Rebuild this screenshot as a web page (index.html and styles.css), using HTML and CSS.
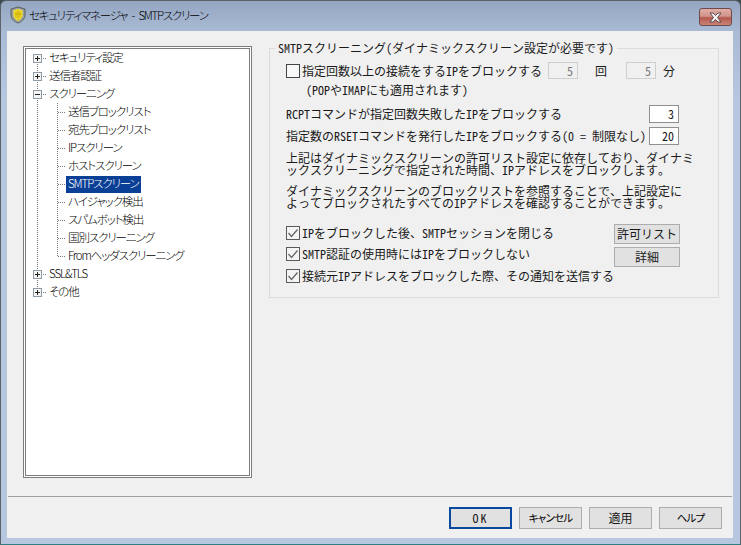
FILE: index.html
```html
<!DOCTYPE html>
<html lang="ja">
<head>
<meta charset="utf-8">
<title>セキュリティマネージャ - SMTPスクリーン</title>
<link rel="stylesheet" href="styles.css">
</head>
<body>
<div class="window">
  <header class="titlebar">
    <svg class="shield" width="16" height="18" viewBox="0 0 16 18">
      <path d="M1 3 L8 1 L15 3 L15 9 C15 13 11 16 8 17 C5 16 1 13 1 9 Z" fill="#9a9e9c" stroke="#5c5f5f" stroke-width="1"/>
      <path d="M3.500 4.500 L8 3 L12.500 4.500 L12.500 9 C12.500 11.500 10 14 8 15 C6 14 3.500 11.500 3.500 9 Z" fill="#f6e62a"/>
      <path d="M6 5 V12 M8 4 V14 M10 5 V12 M4.500 8 H11.500" stroke="#c9a60f" stroke-width="1" fill="none"/>
    </svg>
    <span class="title">セキュリティマネージャ - SMTPスクリーン</span>
    <button class="close" type="button" aria-label="閉じる">
      <svg width="15" height="11" viewBox="0 0 15 11">
        <path d="M2 1 H5 L7.500 3.500 L10 1 H13 L9.500 5.500 L13 10 H10 L7.500 7.500 L5 10 H2 L5.500 5.500 Z" fill="#f4f4f6" stroke="#5c4a4e" stroke-width="1"/>
      </svg>
    </button>
  </header>
  <div class="client">
    <div class="main">
      <nav class="tree">
        <ul class="roots">
          <li class="row"><span class="box plus"></span><span class="dash-root"></span><span class="label">セキュリティ設定</span></li>
          <li class="row"><span class="box plus"></span><span class="dash-root"></span><span class="label">送信者認証</span></li>
          <li>
            <div class="row"><span class="box minus"></span><span class="dash-root"></span><span class="label">スクリーニング</span></div>
            <ul class="children">
              <li class="row"><span class="dash-child"></span><span class="label">送信ブロックリスト</span></li>
              <li class="row"><span class="dash-child"></span><span class="label">宛先ブロックリスト</span></li>
              <li class="row"><span class="dash-child"></span><span class="label">IPスクリーン</span></li>
              <li class="row"><span class="dash-child"></span><span class="label">ホストスクリーン</span></li>
              <li class="row"><span class="dash-child"></span><span class="label selected">SMTPスクリーン</span></li>
              <li class="row"><span class="dash-child"></span><span class="label">ハイジャック検出</span></li>
              <li class="row"><span class="dash-child"></span><span class="label">スパムボット検出</span></li>
              <li class="row"><span class="dash-child"></span><span class="label">国別スクリーニング</span></li>
              <li class="row"><span class="dash-child"></span><span class="label">Fromヘッダスクリーニング</span></li>
            </ul>
          </li>
          <li class="row"><span class="box plus"></span><span class="dash-root"></span><span class="label">SSL&amp;TLS</span></li>
          <li class="row"><span class="box plus"></span><span class="dash-root"></span><span class="label">その他</span></li>
        </ul>
      </nav>
      <fieldset class="group">
        <legend>SMTPスクリーニング(ダイナミックスクリーン設定が必要です)</legend>
        <div class="line first">
          <span class="cb"></span>
          <span class="cb-text grow">指定回数以上の接続をするIPをブロックする</span>
          <span class="field disabled">5</span>
          <span class="unit-a">回</span>
          <span class="field disabled">5</span>
          <span class="unit-b">分</span>
        </div>
        <p class="note">(POPやIMAPにも適用されます)</p>
        <div class="line rcpt">
          <span class="grow">RCPTコマンドが指定回数失敗したIPをブロックする</span>
          <span class="field">3</span>
        </div>
        <div class="line rset">
          <span class="grow">指定数のRSETコマンドを発行したIPをブロックする(0 = 制限なし)</span>
          <span class="field">20</span>
        </div>
        <p class="para one">上記はダイナミックスクリーンの許可リスト設定に依存しており、ダイナミ<br>ックスクリーニングで指定された時間、IPアドレスをブロックします。</p>
        <p class="para two">ダイナミックスクリーンのブロックリストを参照することで、上記設定に<br>よってブロックされたすべてのIPアドレスを確認することができます。</p>
        <div class="checks">
          <div class="check-col">
            <div class="check-row">
              <svg class="cb-svg" width="14" height="14" viewBox="0 0 14 14"><rect x="0.500" y="0.500" width="13" height="13" fill="#f4f4f4" stroke="#5a5a5a"/><path d="M2.500 7 L5.500 10.500 L11.500 3.500" fill="none" stroke="#666" stroke-width="1.300"/></svg>
              <span class="cb-text">IPをブロックした後、SMTPセッションを閉じる</span>
            </div>
            <div class="check-row">
              <svg class="cb-svg" width="14" height="14" viewBox="0 0 14 14"><rect x="0.500" y="0.500" width="13" height="13" fill="#f4f4f4" stroke="#5a5a5a"/><path d="M2.500 7 L5.500 10.500 L11.500 3.500" fill="none" stroke="#666" stroke-width="1.300"/></svg>
              <span class="cb-text">SMTP認証の使用時にはIPをブロックしない</span>
            </div>
            <div class="check-row">
              <svg class="cb-svg" width="14" height="14" viewBox="0 0 14 14"><rect x="0.500" y="0.500" width="13" height="13" fill="#f4f4f4" stroke="#5a5a5a"/><path d="M2.500 7 L5.500 10.500 L11.500 3.500" fill="none" stroke="#666" stroke-width="1.300"/></svg>
              <span class="cb-text">接続元IPアドレスをブロックした際、その通知を送信する</span>
            </div>
          </div>
          <div class="side-buttons">
            <button class="side" type="button">許可リスト</button>
            <button class="side" type="button">詳細</button>
          </div>
        </div>
      </fieldset>
    </div>
    <footer class="footer">
      <button class="btn default" type="button">OK</button>
      <button class="btn narrow" type="button">キャンセル</button>
      <button class="btn" type="button">適用</button>
      <button class="btn narrow" type="button">ヘルプ</button>
    </footer>
  </div>
</div>
</body>
</html>
```

FILE: styles.css
```css
* { box-sizing: border-box; }
html, body { margin: 0; padding: 0; }
body {
  width: 741px;
  height: 545px;
  overflow: hidden;
  background: #3c4a4c;
}
.window {
  width: 741px;
  height: 545px;
  display: flex;
  flex-direction: column;
  border-radius: 6px 6px 0 0;
  border: 1px solid #5a6468;
  border-bottom-color: #2f7f80;
  background: linear-gradient(180deg, #94a6c2 0, #a9bad4 30px, #b8c7e0 100px, #b8c7e0 100%);
}
.titlebar {
  height: 30px;
  flex: none;
  display: flex;
  align-items: center;
  padding: 0 8px 2px 9px;
}
.shield { flex: none; margin-right: 3px; }
.title {
  font: 300 11.500px "Noto Sans CJK JP", sans-serif;
  font-feature-settings: "palt";
  color: #000;
  letter-spacing: -1.250px;
  word-spacing: 3px;
}
.close {
  margin-left: auto;
  margin-top: 4px;
  width: 33px;
  height: 18px;
  padding: 0;
  display: flex;
  align-items: center;
  justify-content: center;
  border: 1px solid #6e4a4a;
  border-radius: 3px;
  background: linear-gradient(180deg, #dfaea6 0, #d2938a 45%, #b4594e 55%, #c98478 100%);
}
.client {
  flex: 1;
  margin: 0 7px 6px 6px;
  background: #f0f0f0;
  display: flex;
  flex-direction: column;
}
.main {
  flex: 1;
  display: flex;
  padding: 11px 14px 0 16px;
  min-height: 0;
}
.tree {
  width: 229px;
  height: 432px;
  flex: none;
  margin-top: 4px;
  border: 3px double #7c7c7c;
  background: #fff;
}
ul { list-style: none; margin: 0; padding: 0; }
.roots {
  padding-left: 7px;
  background-image: repeating-linear-gradient(180deg, #777 0 1px, transparent 1px 2px);
  background-repeat: no-repeat;
  background-size: 1px calc(100% - 18px);
  background-position: 11px 9px;
}
.children {
  padding-left: 24px;
  background-image: repeating-linear-gradient(180deg, #777 0 1px, transparent 1px 2px);
  background-repeat: no-repeat;
  background-size: 1px calc(100% - 9px);
  background-position: 24px 0;
}
.row {
  height: 18px;
  display: flex;
  align-items: center;
}
.box {
  width: 9px;
  height: 9px;
  flex: none;
  border: 1px solid #8f9aa5;
  background-color: #f6f6f6;
  background-repeat: no-repeat;
}
.plus {
  background-image: linear-gradient(#222, #222), linear-gradient(#222, #222);
  background-size: 5px 1px, 1px 5px;
  background-position: 1px 3px, 3px 1px;
}
.minus {
  background-image: linear-gradient(#222, #222);
  background-size: 5px 1px;
  background-position: 1px 3px;
}
.dash-root, .dash-child {
  flex: none;
  height: 1px;
  background-image: repeating-linear-gradient(90deg, #777 0 1px, transparent 1px 2px);
}
.dash-root { width: 4px; margin-left: 1px; }
.dash-child { width: 8px; margin-left: 1px; }
.label {
  font: 300 11.500px/15px "Noto Sans CJK JP", sans-serif;
  font-feature-settings: "palt";
  letter-spacing: -1.100px;
  color: #000;
  padding: 0 2px 2px;
  white-space: nowrap;
}
.selected { background: #0a3f96; color: #fff; }
.group {
  width: 450px;
  height: 256px;
  margin: 0 0 0 17px;
  padding: 0 39px 0 16px;
  border: 1px solid #dcdcdc;
  min-width: 0;
  font: 300 12px/12px "Noto Sans Mono CJK JP", "Noto Sans CJK JP", monospace;
  color: #1a1a1a;
}
.group legend {
  padding: 0 3px;
  margin-left: -11px;
  line-height: 12px;
}
.line {
  display: flex;
  align-items: center;
  white-space: nowrap;
}
.first { margin-top: 8px; height: 17px; }
.grow { flex: 1; }
.cb {
  width: 14px;
  height: 14px;
  flex: none;
  border: 1px solid #444;
  background: #f8f8f8;
}
.cb-text { margin-left: 2px; }
.field {
  height: 18px;
  width: 30px;
  flex: none;
  border: 1px solid #8f8f8f;
  background: #fff;
  text-align: right;
  padding: 2px 4px 0 0;
}
.field.disabled {
  height: 17px;
  border-color: #cfcfcf;
  background: #f0f0f0;
  color: #777;
}
.unit-a { width: 48px; text-align: center; padding-right: 2px; }
.unit-b { width: 23px; padding-left: 7px; }
.note { margin: 5px 0 0 20px; }
.rcpt { margin-top: 9px; }
.rset { margin-top: 4px; }
.para { margin: 0; white-space: nowrap; }
.para.one { margin-top: 7px; }
.para.two { margin-top: 9px; }
.checks {
  display: flex;
  justify-content: space-between;
  margin-top: 13px;
}
.check-row {
  display: flex;
  align-items: center;
  height: 21.500px;
  white-space: nowrap;
}
.cb-svg { flex: none; }
.side-buttons {
  display: flex;
  flex-direction: column;
  gap: 3px;
  margin: 2px 1px 0 0;
}
.side {
  width: 66px;
  height: 20px;
  padding: 0;
  border: 1px solid #adadad;
  background: #e1e1e1;
  font: 300 12px/12px "Noto Sans Mono CJK JP", "Noto Sans CJK JP", monospace;
  color: #1a1a1a;
}
.footer {
  flex: none;
  height: 42px;
  margin: 0 1px;
  border-top: 1px solid #a0a0a0;
  display: flex;
  justify-content: flex-end;
  align-items: flex-start;
  gap: 7px;
  padding: 10px 10px 0 0;
}
.btn {
  width: 63px;
  height: 22px;
  padding: 0;
  border: 1px solid #adadad;
  background: #e1e1e1;
  font: 300 12px/12px "Noto Sans Mono CJK JP", "Noto Sans CJK JP", monospace;
  color: #1a1a1a;
}
.btn.narrow {
  font: 400 10.500px/12px "Noto Sans CJK JP", sans-serif;
  font-feature-settings: "palt";
  letter-spacing: -0.800px;
  color: #000;
}
.btn.default { border: 2px solid #0a4a9e; letter-spacing: 2px; }
```
